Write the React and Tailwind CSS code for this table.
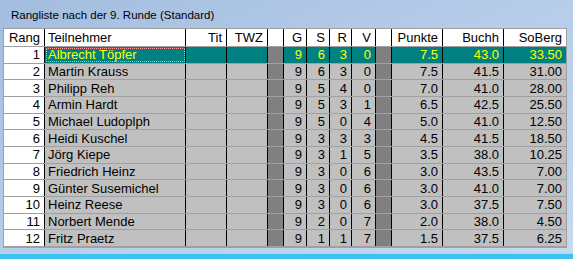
import React from 'react'

const players = [
  [1, 'Albrecht Töpfer', 9, 6, 3, 0, '7.5', '43.0', '33.50'],
  [2, 'Martin Krauss', 9, 6, 3, 0, '7.5', '41.5', '31.00'],
  [3, 'Philipp Reh', 9, 5, 4, 0, '7.0', '41.0', '28.00'],
  [4, 'Armin Hardt', 9, 5, 3, 1, '6.5', '42.5', '25.50'],
  [5, 'Michael Ludoplph', 9, 5, 0, 4, '5.0', '41.0', '12.50'],
  [6, 'Heidi Kuschel', 9, 3, 3, 3, '4.5', '41.5', '18.50'],
  [7, 'Jörg Kiepe', 9, 3, 1, 5, '3.5', '38.0', '10.25'],
  [8, 'Friedrich Heinz', 9, 3, 0, 6, '3.0', '43.5', '7.00'],
  [9, 'Günter Susemichel', 9, 3, 0, 6, '3.0', '41.0', '7.00'],
  [10, 'Heinz Reese', 9, 3, 0, 6, '3.0', '37.5', '7.50'],
  [11, 'Norbert Mende', 9, 2, 0, 7, '2.0', '38.0', '4.50'],
  [12, 'Fritz Praetz', 9, 1, 1, 7, '1.5', '37.5', '6.25'],
]

// widths include the 1px right line
const cols = {
  rang: 'w-[41px]',
  name: 'w-[141px]',
  tit: 'w-[41px]',
  twz: 'w-[41px]',
  sep: 'w-[16px]',
  g: 'w-[23px]',
  s: 'w-[23px]',
  r: 'w-[22px]',
  v: 'w-[24px]',
  pkt: 'w-[51px]',
  buchh: 'w-[61px]',
  soberg: 'w-[62px]',
}

const HeadCell = ({ w, children, left, last }) => (
  <div className={`${w} shrink-0 h-full flex items-center ${left ? 'justify-start pl-[3px]' : 'justify-end pr-[4px]'} ${last ? '' : 'border-r border-black'}`}>
    {children}
  </div>
)

const Cell = ({ w, children, bg, left, last, focus }) => (
  <div className={`${w} ${bg} shrink-0 h-full flex items-center ${left ? 'justify-start pl-[3px]' : 'justify-end pr-[4px]'} ${last ? '' : 'border-r border-black'} ${focus ? 'outline outline-1 outline-dotted outline-[#ff9a9a] -outline-offset-2' : ''}`}>
    {children}
  </div>
)

const Row = ({ p, active }) => {
  const cellBg = active ? 'bg-[#008080] text-[#ffff00]' : 'bg-[#c0c0c0] text-black'
  const [rang, name, g, s, r, v, pkt, buchh, soberg] = p
  return (
    <div className='flex h-[16.67px] border-b border-[#a0a0a0]'>
      <Cell w={cols.rang} bg='bg-white text-black'>{rang}</Cell>
      <Cell w={cols.name} bg={cellBg} left focus={active}>{name}</Cell>
      <Cell w={cols.tit} bg={cellBg}></Cell>
      <Cell w={cols.twz} bg={cellBg}></Cell>
      <Cell w={cols.sep} bg='bg-[#808080]'></Cell>
      <Cell w={cols.g} bg={cellBg}>{g}</Cell>
      <Cell w={cols.s} bg={cellBg}>{s}</Cell>
      <Cell w={cols.r} bg={cellBg}>{r}</Cell>
      <Cell w={cols.v} bg={cellBg}>{v}</Cell>
      <Cell w={cols.sep} bg='bg-[#808080]'></Cell>
      <Cell w={cols.pkt} bg={cellBg}>{pkt}</Cell>
      <Cell w={cols.buchh} bg={cellBg}>{buchh}</Cell>
      <Cell w={cols.soberg} bg={cellBg} last>{soberg}</Cell>
    </div>
  )
}

export default function App() {
  return (
    <div className='w-[573px] h-[259px] flex flex-col bg-gradient-to-br from-[#a3bde0] via-[#b7cdea] to-[#c6d9ef] overflow-hidden' style={{ fontFamily: '"Liberation Sans", Arial, sans-serif' }}>
      {/* Title */}
      <div className='h-[28px] flex items-center pl-[11px] pt-[3px] text-[11.5px] text-black'>
        Rangliste nach der 9. Runde (Standard)
      </div>

      {/* Grid */}
      <div className='ml-[3px] w-[564px] border border-[#a0a0a0] text-[13px] leading-none'>
        <div className='flex h-[18px] bg-white border-b border-[#a0a0a0] text-black'>
          <HeadCell w={cols.rang}>Rang</HeadCell>
          <HeadCell w={cols.name} left>Teilnehmer</HeadCell>
          <HeadCell w={cols.tit}>Tit</HeadCell>
          <HeadCell w={cols.twz}>TWZ</HeadCell>
          <HeadCell w={cols.sep}></HeadCell>
          <HeadCell w={cols.g}>G</HeadCell>
          <HeadCell w={cols.s}>S</HeadCell>
          <HeadCell w={cols.r}>R</HeadCell>
          <HeadCell w={cols.v}>V</HeadCell>
          <HeadCell w={cols.sep}></HeadCell>
          <HeadCell w={cols.pkt}>Punkte</HeadCell>
          <HeadCell w={cols.buchh}>Buchh</HeadCell>
          <HeadCell w={cols.soberg} last>SoBerg</HeadCell>
        </div>
        {players.map((p, i) => (
          <Row key={p[0]} p={p} active={i === 0} />
        ))}
      </div>

      <div className='flex-1'></div>
      {/* bottom taskbar strip */}
      <div className='h-[6px] border-t border-[#9fe0f8] bg-[#3cc2f0]'></div>
    </div>
  )
}
